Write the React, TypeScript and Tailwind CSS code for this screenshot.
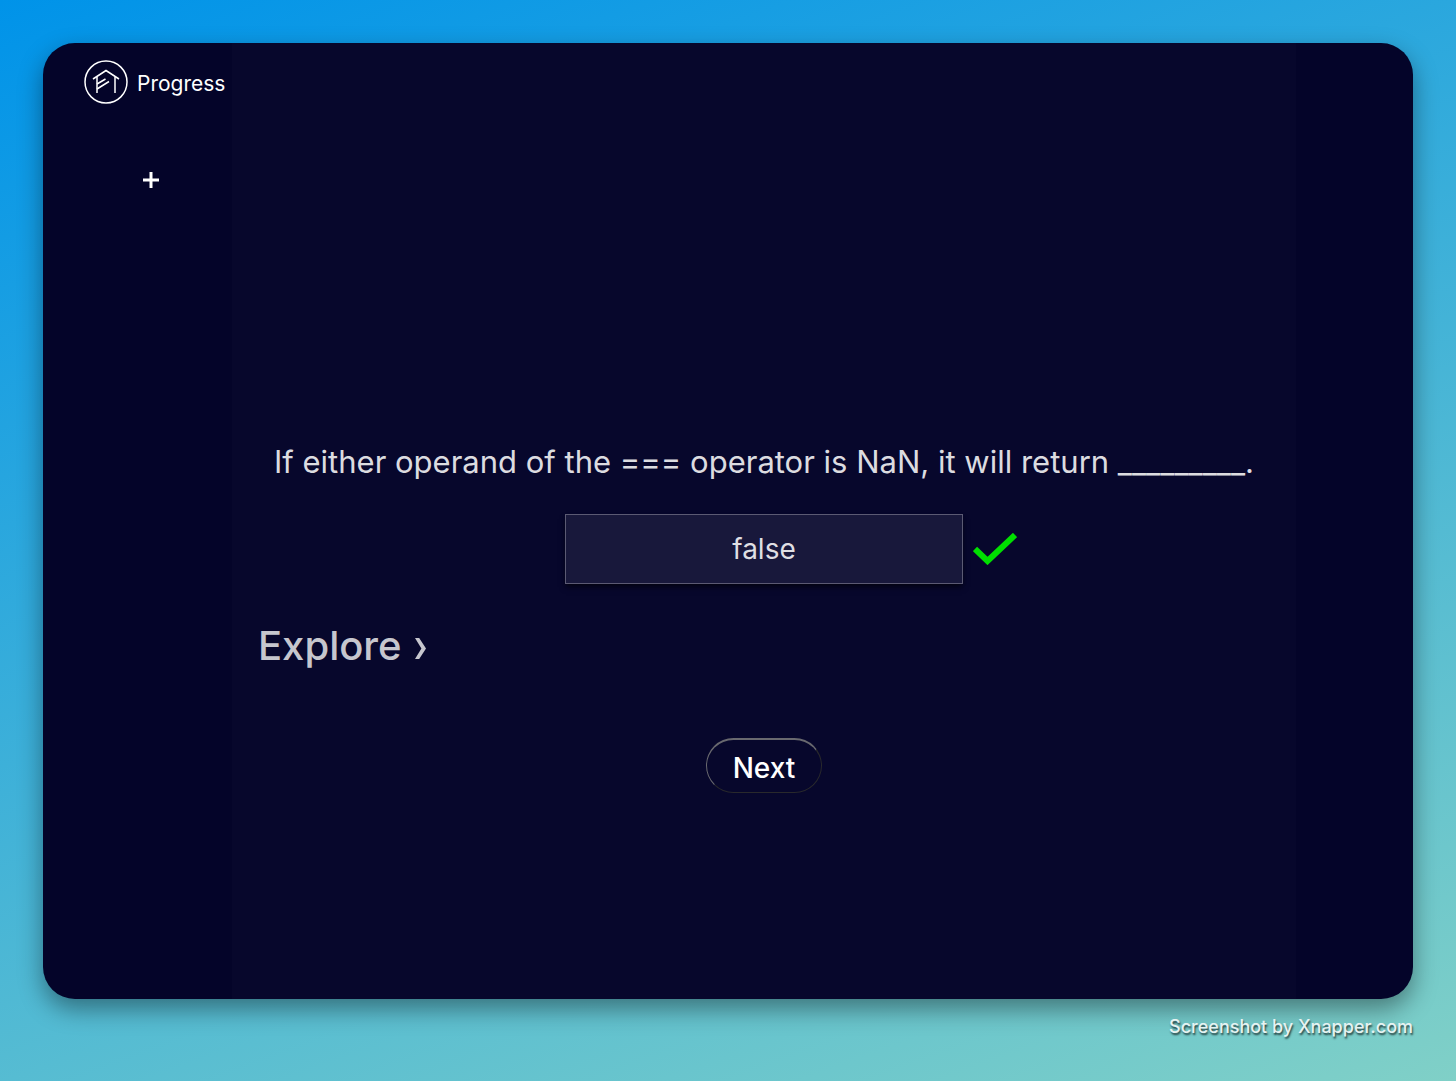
import { FormEvent, useState } from 'react';

const Logo = () => (
  <svg className="h-11 w-11 shrink-0" viewBox="0 0 44 44" fill="none" stroke="white" strokeWidth="1.5" aria-hidden="true">
    <circle cx="22" cy="22" r="21" />
    <path d="M9 19 22 10.5 35 19" />
    <path d="M13 17v16M31 17v16" />
    <path d="M13 24 21.5 19M13 29 25 21.5" />
  </svg>
);

const CheckMark = () => (
  <svg className="h-8 w-11" viewBox="0 0 44 32" fill="none" stroke="#00e000" strokeWidth="6" role="img" aria-label="Correct">
    <path d="M2 16 14.5 28 42 2" />
  </svg>
);

const Sidebar = () => (
  <aside className="flex w-[189px] shrink-0 flex-col pt-[17px] pl-[41px]">
    <a href="#progress" className="flex items-center gap-2 text-[21px] leading-8 text-white">
      <Logo />
      <span className="pt-1 pl-px">Progress</span>
    </a>
    <button type="button" className="mt-16 ml-[55px] flex h-6 w-6 items-center justify-center" aria-label="Add">
      <svg className="h-4 w-4" viewBox="0 0 16 16" stroke="white" strokeWidth="3">
        <path d="M8 0v16M0 8h16" />
      </svg>
    </button>
  </aside>
);

const Question = () => {
  const [answer, setAnswer] = useState('false');

  const onSubmit = (evt: FormEvent) => evt.preventDefault();

  return (
    <form onSubmit={onSubmit} className="flex flex-col px-4 pt-[399px]">
      <label htmlFor="answer" className="text-center text-[31px] leading-10 text-[#dcdce0]">
        If either operand of the === operator is NaN, it will return _________.
      </label>

      <div className="mt-8 grid grid-cols-[1fr_398px_1fr] items-center gap-[10px]">
        <input
          id="answer"
          value={answer}
          onChange={(evt) => setAnswer(evt.target.value)}
          className="col-start-2 h-[70px] w-full border border-[#5b5a73] bg-[#18183b] text-center text-[28px] text-[#dfdfe3] shadow-md shadow-black/50 outline-none"
        />
        <CheckMark />
      </div>

      <button type="button" className="mt-9 flex items-center gap-3 self-start pl-[10px] text-[40px] leading-[52px] font-medium text-[#c6c6ce]">
        Explore
        <svg className="mt-1 h-[21px] w-3" viewBox="0 0 12 21" fill="#c6c6ce" aria-hidden="true">
          <path d="M1 0h4.2L12 10.5 5.2 21H1L7.4 10.5z" />
        </svg>
      </button>

      <button
        type="submit"
        className="mt-[66px] h-[55px] w-[116px] self-center rounded-full border border-t-2 border-t-[#69696f] border-r-[#29292c] border-b-[#29292c] border-l-[#69696f] pt-[3px] text-[28px] font-medium text-white"
      >
        Next
      </button>
    </form>
  );
};

const App = () => {
  return (
    <div className="flex min-h-screen flex-col bg-[linear-gradient(160deg,#0093e9_0%,#80d0c7_100%)] px-[43px] pt-[43px] font-['Inter',sans-serif]">
      <div className="flex grow overflow-hidden rounded-[32px] bg-[#040429] shadow-[0_10px_24px_rgba(0,0,0,0.4)]">
        <Sidebar />
        <main className="grow bg-[#07072c] pb-10">
          <Question />
        </main>
        <div className="w-[117px] shrink-0" />
      </div>

      <footer className="flex h-[82px] justify-end pt-4 text-[18px] leading-6 font-medium text-[#e6f3f2] [text-shadow:1px_2px_2px_rgba(0,0,0,0.7)]">Screenshot by Xnapper.com</footer>
    </div>
  );
};

export default App;
